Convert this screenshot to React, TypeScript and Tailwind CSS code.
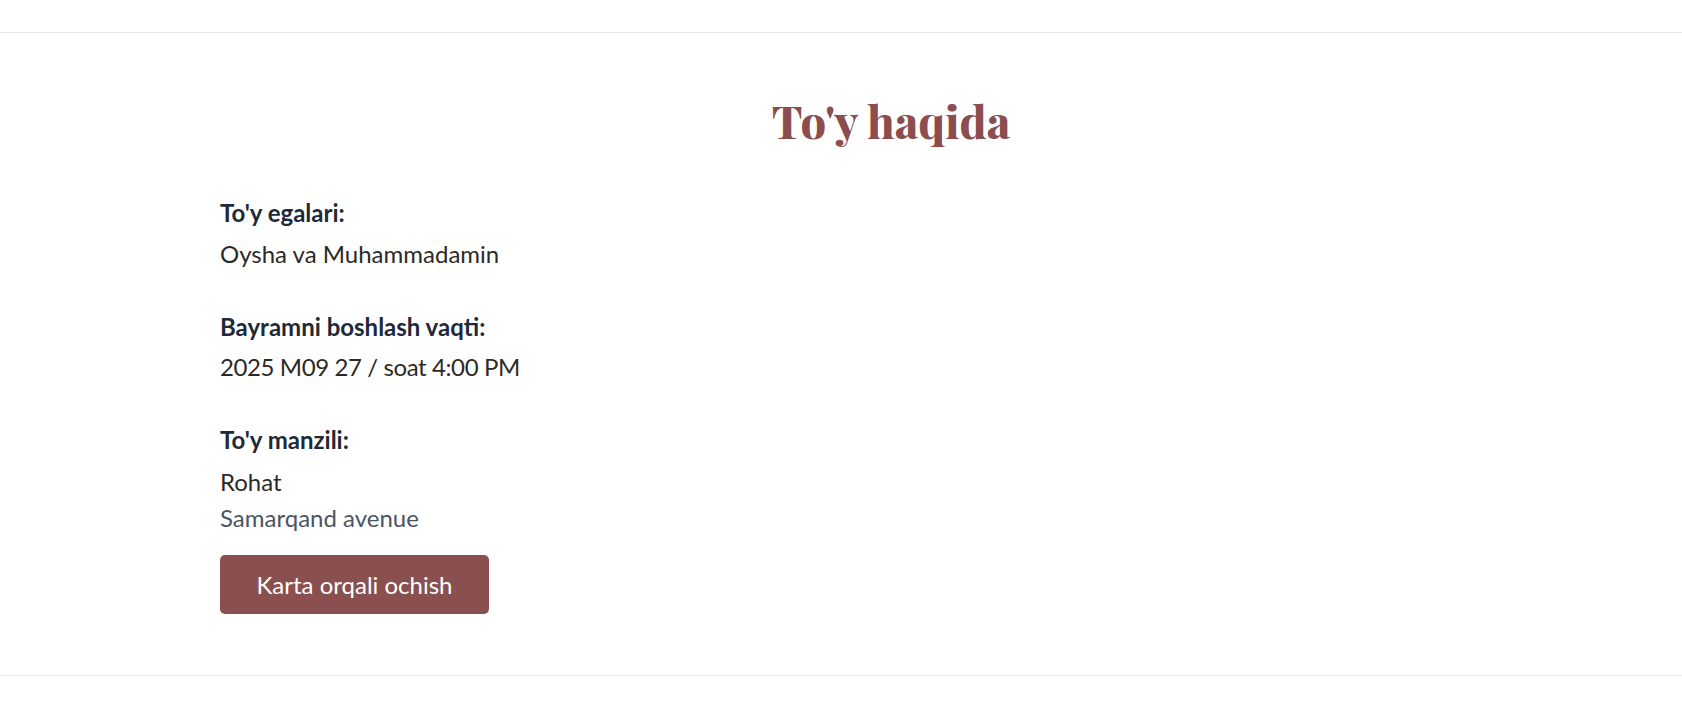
export default function App() {
  return (
    <div className="min-h-[702px] bg-white" style={{ fontFamily: "Lato, 'Noto Sans', sans-serif" }}>
      <div className="h-[33px] border-b border-[#e5e7eb]" />
      <section className="border-b border-[#e5e7eb] pt-[65px] pb-[61px] pl-[220px] pr-[120px]">
        <h2
          className="text-center text-[45px] leading-[45px] font-extrabold text-[#8b4d4d]"
          style={{ fontFamily: "'Playfair Display', 'Liberation Serif', serif" }}
        >
          To'y haqida
        </h2>
        <div className="mt-[54px] flex flex-col">
          <div className="text-[24px] leading-[32px] font-bold text-[#1f2937]">To'y egalari:</div>
          <div className="mt-[9px] text-[24px] leading-[32px] text-[#2d2a26]">Oysha va Muhammadamin</div>
          <div className="mt-[41px] text-[24px] leading-[32px] font-bold text-[#1f2937]">Bayramni boshlash vaqti:</div>
          <div className="mt-[8px] text-[24px] leading-[32px] tracking-[-0.4px] text-[#2d2a26]">2025 M09 27 / soat 4:00 PM</div>
          <div className="mt-[41px] text-[24px] leading-[32px] font-bold text-[#1f2937]">To'y manzili:</div>
          <div className="mt-[10px] text-[24px] leading-[32px] text-[#2d2a26]">Rohat</div>
          <div className="mt-[4px] text-[24px] leading-[32px] text-[#4b5563]">Samarqand avenue</div>
          <div className="mt-[21px]">
            <button className="h-[59px] w-[269px] rounded-[5px] bg-[#8a4f4f] text-[24px] text-white">
              Karta orqali ochish
            </button>
          </div>
        </div>
      </section>
    </div>
  );
}
